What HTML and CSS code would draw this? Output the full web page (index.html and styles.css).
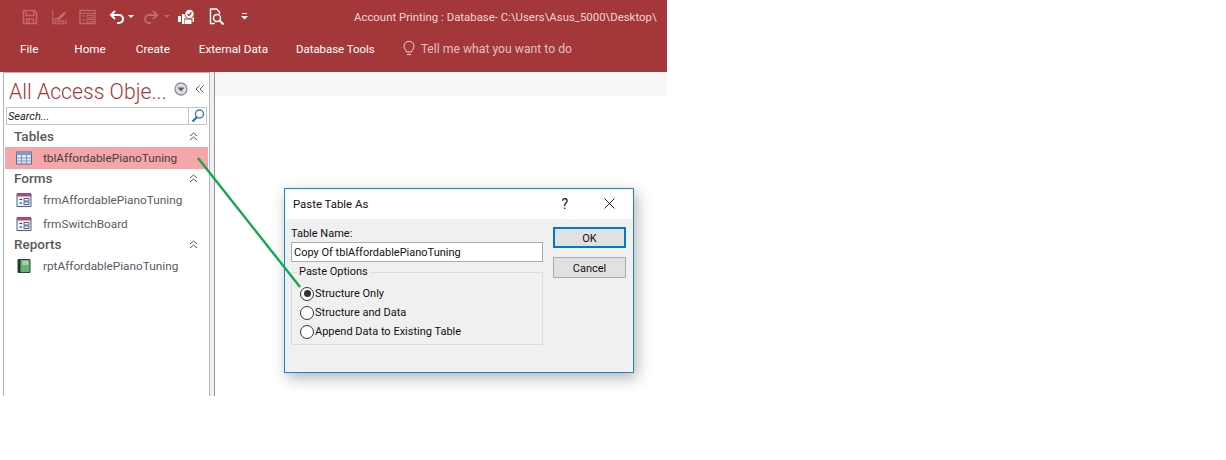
FILE: index.html
```html
<!DOCTYPE html>
<html lang="en">
<head>
<meta charset="utf-8">
<title>Account Printing</title>
<link rel="stylesheet" href="styles.css">
</head>
<body>
<div class="app">
  <header class="ribbon">
    <div class="qat">
      <div class="qat-icons">
        <svg class="ic dim i1" viewBox="0 0 16 16"><path d="M1.500 1.500h11l2 2v11h-13z M4 2v4.500h8V2 M4.500 14.500V10h7v4.500 M7 11v3" fill="none" stroke="currentColor" stroke-width="1.500"/></svg>
        <svg class="ic dim i2" viewBox="0 0 18 18"><path d="M2 1v11l5-2 M2 16.500h15v-3H2z M5 14v2M8 14v2M11 14v2M14 14v2" fill="none" stroke="currentColor" stroke-width="1.200"/><path d="M6 11l9-8 2 2-8 8z" fill="currentColor"/></svg>
        <svg class="ic dim i3" viewBox="0 0 17 16"><path d="M1 1.500h15v13H1z" fill="none" stroke="currentColor" stroke-width="1.300"/><path d="M1 4.500h15M3 7h3M3 11h3M8 6.500h6v2.500H8zM8 10.500h6V13H8z" fill="none" stroke="currentColor" stroke-width="1.100"/></svg>
        <svg class="ic i4" viewBox="0 0 16 16"><path d="M6 2 2 6l4 4" fill="none" stroke="currentColor" stroke-width="2"/><path d="M2.500 6H10a4 4 0 0 1 0 8H8" fill="none" stroke="currentColor" stroke-width="2"/></svg>
        <svg class="caret c1" viewBox="0 0 6 4"><path d="M0 0h6L3 3z" fill="currentColor"/></svg>
        <svg class="ic dim i5" viewBox="0 0 16 16"><path d="M10 2l4 4-4 4" fill="none" stroke="currentColor" stroke-width="2"/><path d="M13.500 6H6a4 4 0 0 0 0 8h2" fill="none" stroke="currentColor" stroke-width="2"/></svg>
        <svg class="caret c2 dim" viewBox="0 0 6 4"><path d="M0 0h6L3 3z" fill="currentColor"/></svg>
        <svg class="ic i6" viewBox="0 0 17 16"><path d="M0 7h3v6H0zM4 5h9v3h3v5h-3v2H4z" fill="currentColor"/><circle cx="11.500" cy="5" r="5" fill="#a4373a"/><circle cx="11.500" cy="5" r="4.200" fill="currentColor"/><path d="M9.500 5l1.500 1.500 2.500-3" fill="none" stroke="#a4373a" stroke-width="1.300"/><path d="M6 9.500h8.500v5.500H6z" fill="#a4373a"/><path d="M6.500 10.500h7V15h-7z" fill="currentColor"/></svg>
        <svg class="ic i7" viewBox="0 0 15 17"><path d="M6 15.500H1.500V1h6l3 3v2" fill="none" stroke="currentColor" stroke-width="1.400"/><circle cx="8" cy="10" r="3.500" fill="none" stroke="currentColor" stroke-width="1.500"/><path d="M10.500 12.500l4 4" stroke="currentColor" stroke-width="2"/></svg>
        <svg class="more" viewBox="0 0 7 7"><path d="M1 .5h5" stroke="currentColor"/><path d="M0 3h7L3.500 6.500z" fill="currentColor"/></svg>
      </div>
      <div class="doc-title">Account Printing : Database- C:\Users\Asus_5000\Desktop\</div>
    </div>
    <nav class="tabs">
      <span class="tab t-file">File</span>
      <span class="tab t-home">Home</span>
      <span class="tab t-create">Create</span>
      <span class="tab t-ext">External Data</span>
      <span class="tab t-db">Database Tools</span>
      <svg class="bulb" viewBox="0 0 12 16"><path d="M3.500 11C3 8.500 1 8 1 5.300a5 5 0 0 1 10 0C11 8 9 8.500 8.500 11z M4 13.500h4" fill="none" stroke="currentColor" stroke-width="1"/></svg>
      <span class="tell">Tell me what you want to do</span>
    </nav>
  </header>
  <div class="workspace">
    <aside class="nav">
      <div class="nav-head">
        <span class="nav-title">All Access Obje...</span>
        <svg class="nav-drop" viewBox="0 0 14 14"><circle cx="7" cy="7" r="6" fill="#dcdde3" stroke="#8f8f98" stroke-width="1.300"/><path d="M3.500 5.500h7L7 9.500z" fill="#5c5c68"/></svg>
        <svg class="nav-collapse" viewBox="0 0 9 8"><path d="M4.500.5 1 4l3.500 3.500M8.500.5 5 4l3.500 3.500" fill="none" stroke="#555" stroke-width="1"/></svg>
      </div>
      <div class="search">
        <span class="search-text">Search...</span>
        <span class="search-btn"><svg viewBox="0 0 14 14"><circle cx="8.500" cy="5" r="4" fill="#fff" stroke="#3f7fb6" stroke-width="1.500"/><path d="M6 8l-4.500 4.500" stroke="#2a6aa5" stroke-width="2.200"/></svg></span>
      </div>
      <div class="group t1"><span>Tables</span><svg class="chev" viewBox="0 0 9 9"><path d="M1 4l3.500-3L8 4M1 8l3.500-3L8 8" fill="none" stroke="#555"/></svg></div>
      <div class="item sel">
        <svg class="obj" viewBox="0 0 16 13"><path d="M.5.500h15v12H.5z" fill="#dfe9f6" stroke="#4a6a9a"/><path d="M.5.500h15v3H.5z" fill="#7f9cc6"/><path d="M.5 6.500h15M.5 9.500h15M5.500 3.500v9M10.500 3.500v9" stroke="#7c97bf"/></svg>
        <span>tblAffordablePianoTuning</span>
      </div>
      <div class="group t2"><span>Forms</span><svg class="chev" viewBox="0 0 9 9"><path d="M1 4l3.500-3L8 4M1 8l3.500-3L8 8" fill="none" stroke="#555"/></svg></div>
      <div class="item">
        <svg class="obj" viewBox="0 0 15 14"><path d="M.5.500h14v13H.5z" fill="#eef3fa" stroke="#4a5f8a"/><path d="M.5.500h14v3H.5z" fill="#b44a78"/><path d="M3 6.500h2.500M3 10h2.500" stroke="#334"/><path d="M7.500 5.500h5v2.500h-5zM7.500 9h5v2.500h-5z" fill="#fff" stroke="#4a5f8a"/></svg>
        <span>frmAffordablePianoTuning</span>
      </div>
      <div class="item">
        <svg class="obj" viewBox="0 0 15 14"><path d="M.5.500h14v13H.5z" fill="#eef3fa" stroke="#4a5f8a"/><path d="M.5.500h14v3H.5z" fill="#b44a78"/><path d="M3 6.500h2.500M3 10h2.500" stroke="#334"/><path d="M7.500 5.500h5v2.500h-5zM7.500 9h5v2.500h-5z" fill="#fff" stroke="#4a5f8a"/></svg>
        <span>frmSwitchBoard</span>
      </div>
      <div class="group t3"><span>Reports</span><svg class="chev" viewBox="0 0 9 9"><path d="M1 4l3.500-3L8 4M1 8l3.500-3L8 8" fill="none" stroke="#555"/></svg></div>
      <div class="item">
        <svg class="obj" viewBox="0 0 13 14"><path d="M.5.500h12v13H.5z" fill="#6aae74" stroke="#2e4a34"/><path d="M.5.500h2.500v13H.5z" fill="#23352a"/><path d="M5 2h6v4H5z" fill="#a3d9a6"/></svg>
        <span>rptAffordablePianoTuning</span>
      </div>
    </aside>
    <div class="splitter"></div>
    <main class="doc"><div class="doc-tabs"></div></main>
  </div>
</div>

<section class="dialog">
  <div class="dlg-title">
    <span class="dlg-name">Paste Table As</span>
    <span class="dlg-help">?</span>
    <svg class="dlg-close" viewBox="0 0 11 11"><path d="M.5.500l10 10M10.500.500l-10 10" stroke="#222" stroke-width="1"/></svg>
  </div>
  <div class="dlg-body">
    <div class="dlg-main">
      <label class="field-label">Table Name:</label>
      <div class="field">Copy Of tblAffordablePianoTuning</div>
      <fieldset class="options">
        <legend>Paste Options</legend>
        <div class="radio on"><i></i><span>Structure Only</span></div>
        <div class="radio"><i></i><span>Structure and Data</span></div>
        <div class="radio"><i></i><span>Append Data to Existing Table</span></div>
      </fieldset>
    </div>
    <div class="dlg-btns">
      <button class="btn default">OK</button>
      <button class="btn">Cancel</button>
    </div>
  </div>
</section>

<svg class="arrow" viewBox="0 0 110 135"><path d="M1 1 103 130" stroke="#12a850" stroke-width="2.400" fill="none"/></svg>
</body>
</html>
```
FILE: styles.css
```css
html, body { margin: 0; padding: 0; background: #fff; }
body { width: 1226px; height: 460px; overflow: hidden; position: relative; font-family: Roboto, "Noto Sans", sans-serif; }

.app { width: 667px; height: 396px; display: flex; flex-direction: column; }

.ribbon { height: 72px; background: #a4373a; color: #fff; flex: none; }
.qat { height: 33px; display: flex; align-items: center; justify-content: space-between; }
.qat-icons { display: flex; align-items: center; padding-left: 22px; color: #fff; }
.ic { height: 16px; display: block; flex: none; }
.i1 { width: 16px; }
.dim { color: #c0686a; }
.i2 { width: 18px; margin-left: 12px; }
.i3 { width: 17px; margin-left: 11px; }
.i4 { width: 16px; margin-left: 13px; }
.i5 { width: 16px; margin-left: 9px; }
.i6 { width: 17px; margin-left: 8px; }
.i7 { width: 15px; margin-left: 14px; height: 17px; }
.caret { width: 6px; height: 4px; flex: none; }
.c1 { margin-left: 3px; }
.c2 { margin-left: 5px; }
.more { width: 7px; height: 7px; margin-left: 17px; flex: none; }
.doc-title { width: 313px; white-space: nowrap; font-size: 11.400px; color: #f0d4d4; }

.tabs { height: 39px; display: flex; align-items: center; font-size: 11.700px; padding-bottom: 7px; box-sizing: border-box; }
.tab { white-space: nowrap; }
.t-file { margin-left: 20px; }
.t-home { margin-left: 36px; }
.t-create { margin-left: 30px; }
.t-ext { margin-left: 29px; }
.t-db { margin-left: 28px; font-size: 11.400px; }
.bulb { width: 12px; height: 16px; margin-left: 28px; color: #f0d4d4; flex: none; }
.tell { margin-left: 6px; font-size: 12.200px; color: #e6bfc0; white-space: nowrap; }

.workspace { flex: 1; display: flex; min-height: 0; }
.nav { width: 205px; margin-left: 3px; border-left: 1px solid #b4b6bd; border-right: 1px solid #b4b6bd; border-top: 1px solid #b4b6bd; flex: none; background: #fff; box-sizing: content-box; }
.nav-head { height: 34px; display: flex; align-items: center; }
.nav-title { margin-left: 5px; width: 165px; padding-top: 3px; font-size: 21.200px; font-weight: 300; color: #a4373a; white-space: nowrap; line-height: 31px; }
.nav-drop { width: 14px; height: 14px; flex: none; margin-top: -3px; }
.nav-collapse { width: 9px; height: 8px; margin-left: 7px; margin-top: -3px; flex: none; }
.search { height: 16px; margin: 0 2px; border: 1px solid #c6c6c6; display: flex; align-items: center; background: #fff; }
.search-text { flex: 1; font-size: 11px; font-style: italic; color: #222; padding-left: 1px; }
.search-btn { width: 17px; height: 16px; border-left: 1px solid #c6c6c6; display: flex; align-items: center; justify-content: center; }
.search-btn svg { width: 14px; height: 14px; }

.group { display: flex; justify-content: space-between; align-items: center; font-size: 13.500px; font-weight: 500; color: #5a5a5a; height: 18px; padding: 0 11px 0 10px; }
.group.t1 { margin-top: 2px; margin-bottom: 2px; }
.group.t2 { margin-bottom: 1px; }
.chev { width: 9px; height: 9px; }
.group.t3 { margin-top: -1px; margin-bottom: 1px; }
.item { display: flex; align-items: center; height: 24px; font-size: 11.800px; color: #555b66; padding-left: 12px; }
.item span { margin-left: 11px; white-space: nowrap; }
.item.sel { height: 22px; background: #f6a6a9; margin: 0 1px; padding-left: 11px; color: #3f3f46; }
.obj { width: 16px; height: 14px; flex: none; }

.splitter { width: 4px; background: #f0f0f0; border-right: 1px solid #8c96a3; flex: none; box-sizing: content-box; }
.doc { flex: 1; background: #fff; }
.doc-tabs { height: 24px; background: #f7f7f7; }

.dialog { position: absolute; left: 284px; top: 188px; width: 348px; height: 183px; border: 1px solid #1883d7; background: #f0f0f0; box-shadow: 3px 5px 14px rgba(0,0,0,.3); font-size: 11px; color: #111; }
.dlg-title { height: 30px; background: #fff; display: flex; align-items: center; font-size: 11.400px; padding-bottom: 1px; box-sizing: border-box; }
.dlg-name { margin-left: 8px; flex: 1; }
.dlg-help { font-size: 14px; margin-right: 36px; }
.dlg-close { width: 11px; height: 11px; margin-right: 18px; }
.dlg-body { display: flex; padding: 7px 7px 0 6px; }
.dlg-main { width: 252px; }
.field-label { display: block; height: 16px; line-height: 16px; }
.field { height: 18px; line-height: 19px; border: 1px solid #ababab; background: #fff; padding-left: 2px; white-space: nowrap; }
.options { margin: 3px 0 0; padding: 5px 0 0 8px; border: 1px solid #dcdcdc; height: 80px; box-sizing: border-box; width: 252px; }
.options legend { padding: 0 2px; margin-left: -3px; line-height: 14px; }
.radio { display: flex; align-items: center; height: 19px; }
.radio i { width: 12px; height: 12px; border: 1px solid #333; border-radius: 50%; background: #fff; flex: none; position: relative; }
.radio.on i::after { content: ""; position: absolute; left: 2.500px; top: 2.500px; width: 7px; height: 7px; border-radius: 50%; background: #333; }
.radio span { margin-left: 1px; white-space: nowrap; }
.dlg-btns { margin-left: 10px; margin-top: 1px; display: flex; flex-direction: column; }
.btn { width: 73px; height: 21px; padding: 1px 0 0; border: 1px solid #adadad; background: #e1e1e1; font: inherit; color: #111; margin-top: 9px; }
.btn.default { border: 2px solid #0078d7; margin-top: 0; }

.arrow { position: absolute; left: 197px; top: 157px; width: 110px; height: 135px; }
```
